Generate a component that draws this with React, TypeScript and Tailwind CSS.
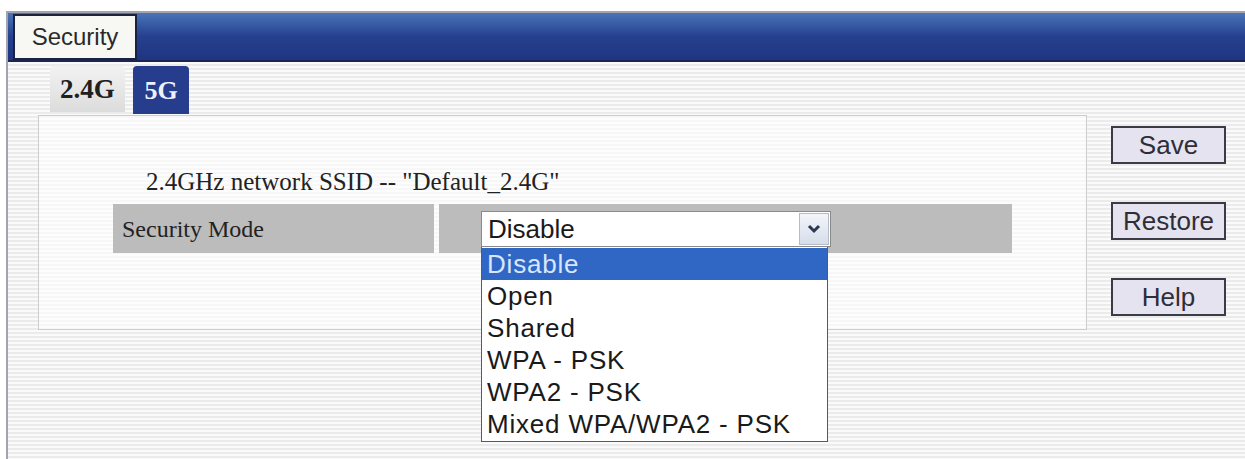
import React from "react";

const serif = "font-['Liberation_Serif','Times_New_Roman',serif]";
const sans = "font-['Liberation_Sans',Arial,sans-serif]";

const modes = [
  "Disable",
  "Open",
  "Shared",
  "WPA - PSK",
  "WPA2 - PSK",
  "Mixed WPA/WPA2 - PSK",
];

const stripes =
  "bg-[repeating-linear-gradient(to_bottom,#fafafa_0px,#fafafa_2px,#ebebeb_2px,#ebebeb_4px)]";

const SideButton = ({ label }: { label: string }) => (
  <button
    className={`w-[115px] h-[38px] bg-[#e5e3f0] border-2 border-[#3b3b45] text-[26px] leading-none text-[#2e2e38] ${sans}`}
  >
    {label}
  </button>
);

const ModeSelect = () => {
  return (
    <div className="absolute left-[42px] top-[7px] w-[350px]">
      {/* closed select */}
      <div className="h-[36px] bg-white border border-[#8a8a8a] flex items-center justify-between">
        <span className={`pl-[6px] text-[26px] leading-none text-[#1a1a1a] ${sans}`}>
          Disable
        </span>
        <div className="w-[30px] h-[32px] mr-[1px] border border-[#b3bccb] bg-gradient-to-b from-[#f2f5fa] to-[#d7deea] flex items-center justify-center">
          <svg width="14" height="10" viewBox="0 0 14 10">
            <path d="M2 2 L7 7 L12 2" fill="none" stroke="#2c3852" strokeWidth="3" />
          </svg>
        </div>
      </div>
      {/* open list */}
      <ul className="w-[347px] bg-white border border-[#5a5a5a] border-t-0 py-[1px]">
        {modes.map((m, i) => (
          <li
            key={m}
            className={`h-[32px] pl-[5px] flex items-center text-[26px] tracking-[0.8px] leading-none ${sans} ${
              i === 0 ? "bg-[#3167c4] text-[#d8e6ff]" : "text-[#1a1a1a]"
            }`}
          >
            {m}
          </li>
        ))}
      </ul>
    </div>
  );
};

export default function App() {
  return (
    <div className="w-[1245px] h-[459px] bg-white pt-[11px] pl-[6px] overflow-hidden">
      <div className="h-[448px] border-l-2 border-t-2 border-[#a4a4ac] flex flex-col">
        {/* title bar */}
        <div className="h-[49px] bg-gradient-to-b from-[#4a74b8] via-[#26408f] to-[#1f3580] border-b-2 border-[#1a2552] flex items-start">
          <div
            className={`ml-[5px] mt-[1px] w-[124px] h-[46px] bg-[#f7f7f4] border-2 border-[#1b2240] flex items-center justify-center text-[24px] text-[#2a2a2a] ${sans}`}
          >
            Security
          </div>
        </div>

        {/* body */}
        <div className={`flex-1 flex ${stripes}`}>
          <div className="ml-[30px] w-[1049px]">
            {/* band tabs */}
            <div className="mt-[4px] h-[49px] ml-[12px] flex items-start gap-[8px]">
              <div
                className={`w-[75px] h-[46px] rounded-t-[4px] bg-gradient-to-b from-[#f2f2f2] to-[#dcdcdc] flex items-center justify-center text-[27px] font-bold text-[#202020] ${serif}`}
              >
                2.4G
              </div>
              <div
                className={`w-[56px] h-[48px] rounded-t-[4px] bg-[#263c8c] flex items-center justify-center text-[26px] font-bold text-[#eef2ff] ${serif}`}
              >
                5G
              </div>
            </div>

            {/* settings panel */}
            <div className="h-[215px] border border-[#cdcdcd] bg-white/60">
              <div className={`pt-[52px] pl-[107px] text-[25px] leading-[28px] text-[#222] ${serif}`}>
                2.4GHz network SSID -- "Default_2.4G"
              </div>
              <div className="mt-[8px] mx-[74px] flex gap-[5px]">
                <div
                  className={`w-[321px] h-[49px] bg-[#bcbcbc] pl-[9px] flex items-center text-[24px] text-[#222] ${serif}`}
                >
                  Security Mode
                </div>
                <div className="flex-1 h-[49px] bg-[#bcbcbc] relative">
                  <ModeSelect />
                </div>
              </div>
            </div>
          </div>

          {/* actions */}
          <div className="ml-[24px] pt-[64px] flex flex-col gap-[38px]">
            <SideButton label="Save" />
            <SideButton label="Restore" />
            <SideButton label="Help" />
          </div>
        </div>
      </div>
    </div>
  );
}
